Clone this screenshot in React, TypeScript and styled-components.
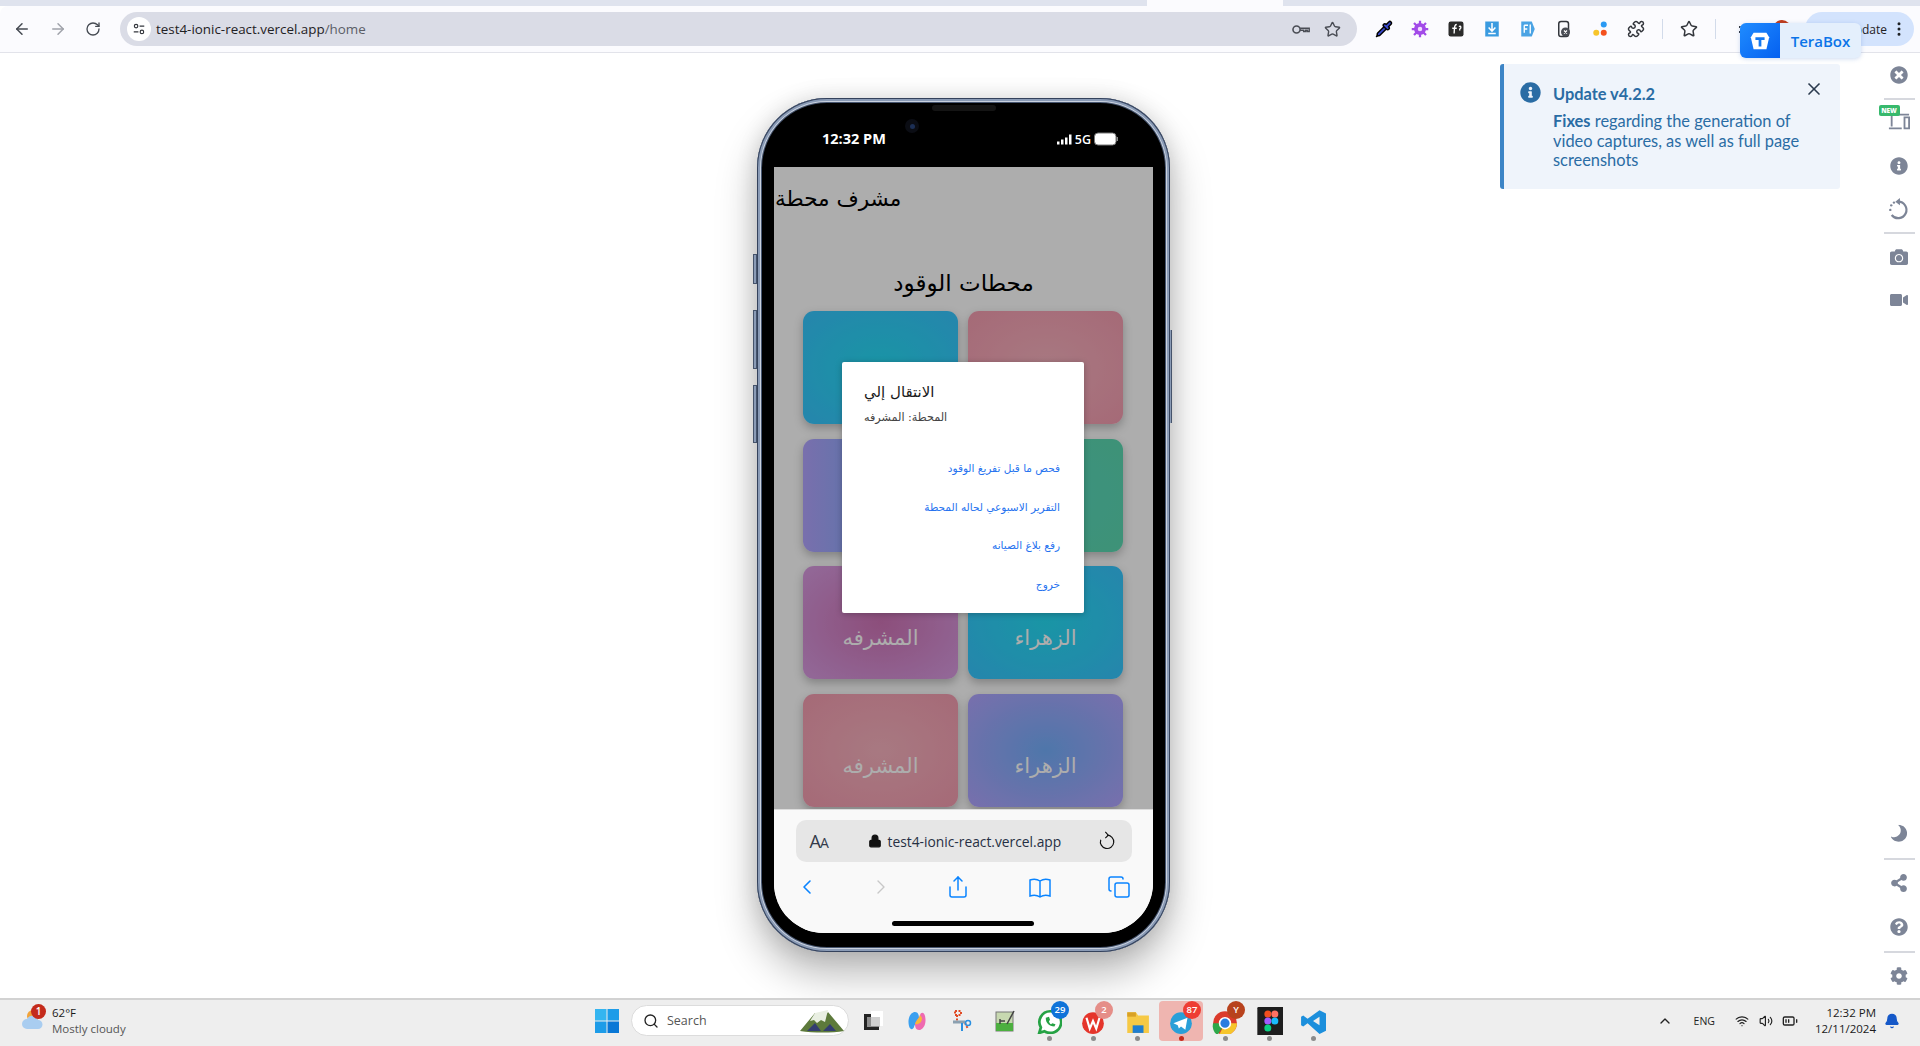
import React from "react";
import styled, { createGlobalStyle } from "styled-components";
import { ArrowLeft, ArrowRight, RotateCw, Star, Puzzle, ChevronLeft, ChevronRight, ChevronUp, X, Lock, Search, Bell, Volume2, Wifi, BatteryMedium, Share, Copy, Pipette, EllipsisVertical } from "lucide-react";
import { FaTimesCircle, FaInfoCircle, FaCamera, FaVideo, FaMoon, FaShareAlt, FaQuestionCircle, FaCog } from "react-icons/fa";

const Global = createGlobalStyle`
  html, body { margin: 0; padding: 0; background: #fff; }
  body { font-family: "Open Sans", "Noto Sans", sans-serif; }
  * { box-sizing: border-box; }
`;

const Page = styled.div`
  width: 1920px; height: 1046px; display: flex; flex-direction: column; overflow: hidden; position: relative;
`;

/* Browser chrome */
const TabStrip = styled.div`
  height: 6px; background: #dfe3ee; flex: none; overflow: hidden; padding-left: 1147px;
`;
const ActiveTab = styled.div`
  width: 136px; height: 6px; background: #fbfbfe;
`;
const Toolbar = styled.header`
  height: 47px; flex: none; background: #fbfbfe; border-bottom: 1px solid #e2e3ea; border-top-left-radius: 8px; display: flex; align-items: center; padding-left: 13px; position: relative;
`;
const NavBtn = styled.span<{ $w?: number; $c?: string }>`
  width: ${p => p.$w ?? 36}px; flex: none; display: flex; color: ${p => p.$c ?? "#454a52"};
`;
const Omni = styled.div`
  width: 1237px; height: 34px; border-radius: 17px; background: #dadce6; display: flex; align-items: center; padding: 0 16px 0 7px; flex: none;
`;
const SiteInfo = styled.span`
  width: 24px; height: 24px; border-radius: 50%; background: #fff; display: flex; align-items: center; justify-content: center; flex: none;
`;
const Url = styled.span`
  font: 13.4px "Open Sans", sans-serif; color: #1f2124; margin-left: 5px; flex: 1;
`;
const UrlPath = styled.span` color: #5b5e66; `;
const OmniIcon = styled.span` display: flex; margin-left: 14px; color: #4a4d55; `;
const ExtRow = styled.div`
  display: flex; align-items: center; margin-left: 9px; flex: none;
`;
const Ext = styled.span`
  width: 36px; height: 24px; display: flex; align-items: center; justify-content: center; flex: none; color: #33363c;
`;
const TbDivider = styled.span`
  width: 1px; height: 20px; background: #d2dbea; margin: 0 8px; flex: none;
`;
const MenuLines = styled.span`
  width: 24px; margin-left: 10px; display: flex; flex-direction: column; align-items: center; gap: 3px; flex: none;
  &::before, &::after { content: ""; width: 14px; height: 2px; background: #33363c; }
`;
const Avatar = styled.span`
  width: 18px; height: 18px; background: #c13a18; border-radius: 50%; margin-left: 15px; flex: none;
`;
const UpdatePill = styled.div`
  width: 109px; height: 34px; border-radius: 17px; background: #d3e3fd; margin-left: 14px; display: flex; align-items: center; justify-content: flex-end; gap: 3px; padding-right: 6px; font: 12px "Open Sans", sans-serif; color: #1f2124; flex: none;
`;
const TeraBox = styled.div`
  position: absolute; left: 1740px; top: 23px; width: 121px; height: 35px; display: flex; border-radius: 6px; overflow: hidden; background: #e4effc; box-shadow: 0 1px 4px rgba(60,110,200,.25); z-index: 5;
`;
const TeraLogo = styled.span`
  width: 40px; background: linear-gradient(135deg, #1f8cff, #0560f0); display: flex; align-items: center; justify-content: center;
`;
const TeraLabel = styled.span`
  flex: 1; text-align: center; font: 600 15px/37px "Open Sans", sans-serif; color: #0b74e8;
`;

/* Main area */
const Main = styled.main`
  flex: 1; display: flex; position: relative; min-height: 0;
`;
const Stage = styled.div`
  flex: 1; padding: 45px 0 0 757px;
`;

/* Phone */
const Phone = styled.div`
  width: 413px; height: 854px; border-radius: 70px; background: #000; position: relative; display: flex; flex-direction: column; padding: 0 17px 19px 17px;
  box-shadow: inset 0 0 0 1px #34425c, inset 0 0 0 3px #8a9bb6, inset 0 0 0 4px #c9d1de, inset 0 0 0 5px #46556f, 0 22px 40px rgba(0,0,0,.28), 0 0 22px rgba(0,0,0,.12);
`;
const SideBtn = styled.span<{ $top: number; $h: number; $right?: boolean }>`
  position: absolute; top: ${p => p.$top}px; height: ${p => p.$h}px; background: #8a9bb6; border: 1px solid #45536b;
  ${p => p.$right ? "right: -2px; width: 2px; border-width: 0 1px 0 0;" : "left: -4px; width: 4px;"}
`;
const StatusBar = styled.div`
  height: 69px; flex: none; display: flex; align-items: flex-end; justify-content: space-between; padding: 0 35px 18px 48px; color: #fff; position: relative;
`;
const Speaker = styled.span`
  position: absolute; left: 158px; top: 7px; width: 64px; height: 6px; border-radius: 3px; background: #141414;
`;
const Camera = styled.span`
  position: absolute; left: 131px; top: 21px; width: 14px; height: 14px; border-radius: 50%; background: #0b0d14; display: flex; align-items: center; justify-content: center;
  &::after { content: ""; width: 5px; height: 5px; border-radius: 50%; background: #1c2f55; }
`;
const Clock = styled.span` font: 700 14.5px "Open Sans", sans-serif; line-height: 20px; `;
const StatusRight = styled.span` display: flex; align-items: center; gap: 3px; font: 600 12.5px "Open Sans", sans-serif; height: 18px; margin-bottom: 1px; `;
const Screen = styled.div`
  flex: 1; min-height: 0; position: relative; display: flex; flex-direction: column; background: #fff; overflow: hidden; border-radius: 0 0 50px 50px;
`;
const Content = styled.div`
  height: 642px; flex: none; position: relative; overflow: hidden; color: #000;
`;
const AppTitle = styled.h1`
  margin: 0; height: 66px; font: 400 21.5px/64px "DejaVu Sans", sans-serif; text-align: left; padding-left: 1px;
`;
const SectionTitle = styled.h2`
  margin: 0; font: 400 23px/40px "DejaVu Sans", sans-serif; text-align: center; padding-top: 30px; height: 78px;
`;
const CardGrid = styled.div`
  display: grid; grid-template-columns: 155px 155px; grid-auto-rows: 113px; column-gap: 10px; row-gap: 14.5px; padding-left: 29px;
`;
const Card = styled.div<{ $bg: string }>`
  border-radius: 11px; background: ${p => p.$bg}; box-shadow: 0 4px 10px rgba(0,0,0,.25); color: #fff; font: 400 21px "DejaVu Sans", sans-serif; display: flex; justify-content: center; padding-top: 60px;
`;
const Scrim = styled.div`
  position: absolute; inset: 0; background: rgba(0,0,0,.32);
`;
const Dialog = styled.div`
  position: absolute; left: 68px; top: 195px; width: 242px; height: 251px; background: #fff; border-radius: 2px; box-shadow: 0 1px 6px rgba(0,0,0,.25); padding: 18px 21px 0 22px;
`;
const DialogTitle = styled.div`
  font: 400 15px/24px "DejaVu Sans", sans-serif; color: #1a1a1a; text-align: left;
`;
const DialogSub = styled.div`
  font: 400 11.2px/27px "DejaVu Sans", sans-serif; color: #444; text-align: left;
`;
const DialogActions = styled.div`
  margin-top: 18px; display: flex; flex-direction: column;
`;
const DialogAction = styled.div`
  height: 38.7px; font: 400 10.5px/38px "DejaVu Sans", sans-serif; color: #2673ef; text-align: right; padding-right: 3px; white-space: nowrap;
`;
const Safari = styled.div`
  flex: 1; background: #f9f9f9; border-top: 1px solid #dcdcdc; display: flex; flex-direction: column; align-items: center; padding-top: 10px; position: relative;
`;
const SafariBar = styled.div`
  width: 336px; height: 42px; background: #e6e6e6; border-radius: 10px; display: flex; align-items: center; padding: 0 15px 0 14px; flex: none;
`;
const AA = styled.span` font: 400 18px "Open Sans", sans-serif; color: #333a4a; letter-spacing: -1px; width: 52px; `;
const SmallA = styled.span` font-size: 14px; `;
const SafariUrl = styled.span`
  flex: 1; display: flex; align-items: center; gap: 6px; font: 400 13.8px "Open Sans", sans-serif; color: #263044; padding-left: 6px;
`;
const SafariNav = styled.div`
  width: 336px; display: grid; grid-template-columns: 74px 77px 82px 79px 24px; align-items: center; margin-top: 10px; height: 30px; margin-left: -2px; color: #0a84ff;
`;
const NavSlot = styled.span<{ $c?: string }>`
  width: 24px; display: flex; justify-content: center; color: ${p => p.$c ?? "inherit"};
`;
const HomeBar = styled.span`
  position: absolute; left: 118px; bottom: 7px; width: 142px; height: 5px; border-radius: 3px; background: #000;
`;

/* Toast */
const Toast = styled.aside`
  position: absolute; left: 1500px; top: 11px; width: 340px; height: 125px; background: #eff4fb; border-left: 4px solid #3d85c6; border-radius: 3px; color: #2a6ca4; padding: 19px 0 0 49px; font-family: "Lato", sans-serif;
`;
const ToastIcon = styled.span`
  position: absolute; left: 16px; top: 18px; display: flex; color: #2a6ca4;
`;
const ToastClose = styled.span`
  position: absolute; left: 300px; top: 15px; display: flex; color: #2b3a4e;
`;
const ToastTitle = styled.div` font: 700 16.4px/22px "Lato", sans-serif; `;
const ToastBody = styled.div` font: 400 16.4px/19.5px "Lato", sans-serif; margin-top: 6px; width: 262px; `;

/* Sidebar */
const Sidebar = styled.nav`
  width: 42px; flex: none; display: flex; flex-direction: column; justify-content: space-between; align-items: center; color: #7d8597;
`;
const SideGroup = styled.div` display: flex; flex-direction: column; align-items: center; `;
const SideItem = styled.span`
  width: 31px; height: 43.5px; display: flex; align-items: center; justify-content: center; position: relative; flex: none;
`;
const SideRule = styled.span<{ $m: number }>`
  width: 31px; height: 2px; background: #d6d8de; margin: ${p => p.$m}px 0; flex: none;
`;
const NewBadge = styled.span`
  position: absolute; left: -5px; top: 4px; width: 21px; height: 11px; background: #37b96c; border-radius: 2px; color: #fff; font: 800 6.5px/11px "Open Sans", sans-serif; text-align: center;
`;
const Crescent = styled(FaMoon)` transform: scaleX(-1) rotate(-12deg); `;

/* Taskbar */
const Taskbar = styled.footer`
  height: 48px; flex: none; background: #eeeeee; border-top: 2px solid #d2d2d2; display: flex; align-items: center; position: relative; padding: 0 0 5px 20px;
`;
const Weather = styled.div`
  width: 575px; flex: none; display: flex; align-items: center; gap: 8px;
`;
const WeatherIcon = styled.span` position: relative; width: 24px; height: 30px; display: flex; `;
const RedBadge = styled.span`
  position: absolute; left: 11px; top: -2px; width: 15px; height: 15px; border-radius: 50%; background: #c42b1c; color: #fff; font: 600 10px/15px "Open Sans", sans-serif; text-align: center;
`;
const WeatherText = styled.div` font: 400 11.5px/16px "Open Sans", sans-serif; color: #1a1a1a; `;
const WeatherSub = styled.div` color: #555; `;
const SearchBox = styled.div`
  width: 218px; height: 31px; margin-left: 12px; border-radius: 16px; background: #fff; border: 1px solid #dcdcdc; display: flex; align-items: center; padding: 0 3px 0 11px; gap: 8px; font: 400 12.5px "Open Sans", sans-serif; color: #555; flex: none;
`;
const SearchLabel = styled.span` flex: 1; `;
const Apps = styled.div`
  display: flex; align-items: center; margin-left: 2px; flex: none;
`;
const AppIcon = styled.span<{ $active?: boolean; $dot?: boolean }>`
  width: 44px; height: 40px; display: flex; align-items: center; justify-content: center; position: relative; border-radius: 4px; flex: none;
  ${p => p.$active ? "background: #efb5b0;" : ""}
  ${p => p.$dot ? `&::after { content: ""; position: absolute; left: 50%; margin-left: -2.5px; bottom: 0; width: 5px; height: 5px; border-radius: 50%; background: ${p.$active ? "#c42b1c" : "#8b8b8b"}; }` : ""}
`;
const CountBadge = styled.span<{ $bg: string }>`
  position: absolute; left: 24px; top: 0; min-width: 18px; height: 18px; border-radius: 9px; background: ${p => p.$bg}; color: #fff; font: 600 9.5px/18px "Open Sans", sans-serif; text-align: center;
`;
const Tray = styled.div`
  margin-left: auto; display: flex; align-items: center; padding-right: 20px; color: #222;
`;
const Eng = styled.span` font: 400 10.5px "Open Sans", sans-serif; margin: 0 15px 0 17px; `;
const TrayIcon = styled.span` display: flex; width: 24px; justify-content: center; `;
const ClockBox = styled.div` font: 400 11.5px/16px "Open Sans", sans-serif; text-align: right; margin: 0 8px 0 13px; color: #1a1a1a; `;

const soft = (a: string, b: string) => `radial-gradient(ellipse closest-corner, ${a} 0%, ${b} 100%)`;
const cards = [
  ["المشرفه", soft("#26dcf4", "#38c5ff")],
  ["الزهراء", soft("#f8b3bf", "#f49cb0")],
  ["المشرفه", "linear-gradient(90deg, #b3a5ff 0%, #74affb 60%, #5ad7bc 100%)"],
  ["الزهراء", soft("#5ad7bc", "#5cd8b0")],
  ["المشرفه", soft("#cf74b6", "#d89ce2")],
  ["الزهراء", soft("#26dcf4", "#38c5ff")],
  ["المشرفه", soft("#f8b3bf", "#f49cb0")],
  ["الزهراء", soft("#74affb", "#b3a5ff")],
];
const actions = ["فحص ما قبل تفريغ الوقود", "التقرير الاسبوعي لحاله المحطة", "رفع بلاغ الصيانه", "خروج"];

const Svg = ({ s = 24, v = "0 0 24 24", children }: { s?: number; v?: string; children: React.ReactNode }) => (
  <svg width={s} height={s} viewBox={v} fill="none">{children}</svg>
);

export default function App() {
  return (
    <Page>
      <Global />
      <TabStrip><ActiveTab /></TabStrip>
      <Toolbar>
        <NavBtn><ArrowLeft size={18} /></NavBtn>
        <NavBtn $c="#a0a3ab"><ArrowRight size={18} /></NavBtn>
        <NavBtn $w={35}><RotateCw size={16} /></NavBtn>
        <Omni>
          <SiteInfo>
            <Svg s={14}>
              <circle cx="7" cy="7" r="3" stroke="#33363c" strokeWidth="2" /><path d="M13 7h8M3 17h8" stroke="#33363c" strokeWidth="2" /><circle cx="17" cy="17" r="3" stroke="#33363c" strokeWidth="2" />
            </Svg>
          </SiteInfo>
          <Url>test4-ionic-react.vercel.app<UrlPath>/home</UrlPath></Url>
          <OmniIcon>
            <Svg s={19}><circle cx="7" cy="12" r="4.500" stroke="#4a4d55" strokeWidth="2" /><path d="M11.500 10.500H23v4h-2.500v-1.500h-2v1.500h-2.500v-1.500h-4.500" stroke="#4a4d55" strokeWidth="1.800" /></Svg>
          </OmniIcon>
          <OmniIcon><Star size={17} /></OmniIcon>
        </Omni>
        <ExtRow>
          <Ext><Pipette size={18} color="#000" fill="#3b4bd0" /></Ext>
          <Ext><Svg s={18}><circle cx="12" cy="12" r="8" fill="#a24be8" /><circle cx="12" cy="12" r="3" fill="#f1d9ff" /><path d="M12 1v5M12 18v5M1 12h5M18 12h5M4 4l4 4M16 16l4 4M20 4l-4 4M8 16l-4 4" stroke="#a24be8" strokeWidth="3" /></Svg></Ext>
          <Ext><Svg s={18}><rect x="2" y="2" width="20" height="20" rx="3" fill="#2b2b2b" /><path d="M13 6c-3 0-3 3-3.500 12M7 11h6M16 9c2-2 4 1 1 3v2" stroke="#fff" strokeWidth="1.800" /></Svg></Ext>
          <Ext><Svg s={18}><rect x="3" y="2" width="18" height="20" fill="#3a9be0" /><path d="M12 4v10M7.500 10l4.500 5 4.500-5M7 18h10" stroke="#fff" strokeWidth="2" /></Svg></Ext>
          <Ext><Svg s={18}><path d="M3 2h14l4 10-4 10H3z" fill="#4aa3e4" /><path d="M7 7h5M7 7v10M7 12h4M15 6v12" stroke="#fff" strokeWidth="1.800" /></Svg></Ext>
          <Ext><Svg s={18}><rect x="5" y="2" width="13" height="20" rx="3" stroke="#33363c" strokeWidth="2" /><circle cx="14" cy="16" r="6" fill="#4a4d55" /><path d="M12 14l4 4M16 14l-4 4" stroke="#fff" strokeWidth="1.500" /></Svg></Ext>
          <Ext><Svg s={18}><circle cx="17" cy="6" r="4" fill="#2b9af3" /><circle cx="7" cy="17" r="4" fill="#f7c52b" /><circle cx="17" cy="17" r="4" fill="#f4511e" /></Svg></Ext>
          <Ext><Puzzle size={18} /></Ext>
          <TbDivider />
          <Ext><Star size={18} /></Ext>
          <TbDivider />
          <MenuLines />
          <Avatar />
          <UpdatePill>Update<EllipsisVertical size={18} /></UpdatePill>
        </ExtRow>
      </Toolbar>
      <TeraBox>
        <TeraLogo>
          <Svg s={22}><path d="M5 3h14l3 5-3 13H5L2 8z" fill="#fff" /><path d="M7 8h10v3h-3.500v7h-3v-7H7z" fill="#1478f0" /></Svg>
        </TeraLogo>
        <TeraLabel>TeraBox</TeraLabel>
      </TeraBox>
      <Main>
        <Stage>
          <Phone>
            <SideBtn $top={156} $h={30} />
            <SideBtn $top={212} $h={59} />
            <SideBtn $top={287} $h={58} />
            <SideBtn $right $top={232} $h={93} />
            <StatusBar>
              <Speaker />
              <Camera />
              <Clock>12:32 PM</Clock>
              <StatusRight>
                <Svg s={15} v="0 0 15 12"><path d="M0 8h2.500v3H0zM4 6h2.500v5H4zM8 4h2.500v7H8zM12 1h2.500v10H12z" fill="#fff" /></Svg>
                5G
                <Svg s={24} v="0 0 24 12"><rect x="0.500" y="0" width="21.500" height="12" rx="3.500" fill="#fff" stroke="#777" /><rect x="22.500" y="4" width="1.500" height="4" fill="#888" /></Svg>
              </StatusRight>
            </StatusBar>
            <Screen>
              <Content>
                <AppTitle>مشرف محطة</AppTitle>
                <SectionTitle>محطات الوقود</SectionTitle>
                <CardGrid>
                  {cards.map(([t, bg], i) => <Card key={i} $bg={bg}>{t}</Card>)}
                </CardGrid>
                <Scrim />
                <Dialog>
                  <DialogTitle>الانتقال إلي</DialogTitle>
                  <DialogSub>المحطة: المشرفه</DialogSub>
                  <DialogActions>
                    {actions.map(a => <DialogAction key={a}>{a}</DialogAction>)}
                  </DialogActions>
                </Dialog>
              </Content>
              <Safari>
                <SafariBar>
                  <AA>A<SmallA>A</SmallA></AA>
                  <SafariUrl><Lock size={14} fill="#111" color="#111" />test4-ionic-react.vercel.app</SafariUrl>
                  <Svg s={20}>
                    <path d="M12 5a8 8 0 1 1-7.500 5.500" stroke="#111" strokeWidth="1.400" /><path d="M10 1l3.500 4L10 8.500" stroke="#111" strokeWidth="1.400" />
                  </Svg>
                </SafariBar>
                <SafariNav>
                  <NavSlot><ChevronLeft size={30} strokeWidth={1.6} /></NavSlot>
                  <NavSlot $c="#c8c8c8"><ChevronRight size={30} strokeWidth={1.4} /></NavSlot>
                  <NavSlot><Share size={24} strokeWidth={1.5} /></NavSlot>
                  <NavSlot>
                    <Svg s={26}><path d="M12 6C9 4 5 4 2 5v16c3-1 7-1 10 1 3-2 7-2 10-1V5c-3-1-7-1-10 1zM12 6v16" stroke="#0a84ff" strokeWidth="1.500" /></Svg>
                  </NavSlot>
                  <NavSlot><Copy size={24} strokeWidth={1.5} /></NavSlot>
                </SafariNav>
                <HomeBar />
              </Safari>
            </Screen>
          </Phone>
        </Stage>
        <Toast>
          <ToastIcon><FaInfoCircle size={21} /></ToastIcon>
          <ToastClose><X size={20} /></ToastClose>
          <ToastTitle>Update v4.2.2</ToastTitle>
          <ToastBody><b>Fixes</b> regarding the generation of video captures, as well as full page screenshots</ToastBody>
        </Toast>
        <Sidebar>
          <SideGroup>
            <SideItem><FaTimesCircle size={18} /></SideItem>
            <SideRule $m={1} />
            <SideItem>
              <Svg s={22}><path d="M4 5v12M1 19h14M18 7h5v12h-5zM6 4h17" stroke="#7d8597" strokeWidth="2" /></Svg>
              <NewBadge>NEW</NewBadge>
            </SideItem>
            <SideItem><FaInfoCircle size={18} /></SideItem>
            <SideItem>
              <Svg s={22}>
                <path d="M11 4a9 9 0 1 1-7 14.500" stroke="#7d8597" strokeWidth="2.400" /><path d="M13 0v8L8 4z" fill="#7d8597" />
                <circle cx="2.500" cy="13" r="1.300" fill="#7d8597" /><circle cx="3.500" cy="8" r="1.300" fill="#7d8597" /><circle cx="6.500" cy="5" r="1.300" fill="#7d8597" />
              </Svg>
            </SideItem>
            <SideRule $m={1} />
            <SideItem><FaCamera size={18} /></SideItem>
            <SideItem><FaVideo size={18} /></SideItem>
          </SideGroup>
          <SideGroup>
            <SideItem><Crescent size={17} /></SideItem>
            <SideRule $m={2} />
            <SideItem><FaShareAlt size={18} /></SideItem>
            <SideItem><FaQuestionCircle size={18} /></SideItem>
            <SideRule $m={2} />
            <SideItem><FaCog size={18} /></SideItem>
          </SideGroup>
        </Sidebar>
      </Main>
      <Taskbar>
        <Weather>
          <WeatherIcon>
            <Svg s={26}><circle cx="13" cy="9" r="6" fill="#f2a33a" /><path d="M7 22a5 5 0 0 1 0-10 6 6 0 0 1 11 1 4.500 4.500 0 0 1 0 9z" fill="#a9cdf0" /></Svg>
            <RedBadge>1</RedBadge>
          </WeatherIcon>
          <WeatherText>62°F<WeatherSub>Mostly cloudy</WeatherSub></WeatherText>
        </Weather>
        <Svg s={24} v="0 0 24 24"><path d="M0 0h11.500v11.500H0z" fill="#34b5f0" /><path d="M12.500 0H24v11.500H12.500z" fill="#1d9ce8" /><path d="M0 12.500h11.500V24H0z" fill="#1d9ce8" /><path d="M12.500 12.500H24V24H12.500z" fill="#0a78d6" /></Svg>
        <SearchBox>
          <Search size={16} color="#222" />
          <SearchLabel>Search</SearchLabel>
          <Svg s={46} v="0 0 46 24"><path d="M1 22L16 4l7 6 6-7 16 19c-12 2-30 2-44 0z" fill="#5d7a3b" /><path d="M16 4l-5 8 4-1 3 3 4-3 4 2 3-12z" fill="#e9efe2" /><path d="M8 22l8-8 6 8zM24 22l7-7 6 7z" fill="#333d70" /></Svg>
        </SearchBox>
        <Apps>
          <AppIcon><Svg s={24}><rect x="3" y="5" width="15" height="16" fill="#222" /><path d="M10 2h12v15H10z" fill="#fff" /><path d="M6 8h13v10H6z" fill="#bbb" opacity=".7" /></Svg></AppIcon>
          <AppIcon><Svg s={24}><path d="M4 17C2 9 6 3 10 3c3 0 4 3 4 6-1 4-4 5-5 9-1 3-4 3-5-1z" fill="#3aa0f0" /><path d="M20 7c2 8-2 14-6 14-3 0-4-3-4-6 1-4 4-5 5-9 1-3 4-3 5 1z" fill="#ef6ab0" /><path d="M10 15c1-4 4-5 5-9l2 3c0 5-4 7-7 6z" fill="#f6b73c" /></Svg></AppIcon>
          <AppIcon><Svg s={24}><path d="M6 2h6v4H6zM8 6v8M16 14l3 6" stroke="#e04a25" strokeWidth="2" strokeDasharray="2 1.500" /><path d="M4 13h12" stroke="#8ba0b0" strokeWidth="3" /><path d="M13 14v8" stroke="#2a8fe0" strokeWidth="2" /><circle cx="19" cy="14" r="2.500" stroke="#2a8fe0" strokeWidth="1.500" /></Svg></AppIcon>
          <AppIcon><Svg s={24}><rect x="3" y="3" width="17" height="19" fill="#c7d8b0" stroke="#777" /><path d="M3 14h17v8H3z" fill="#4caf3f" /><path d="M7 10v5M7 12h5M21 2l-7 13" stroke="#444" strokeWidth="1.500" /></Svg></AppIcon>
          <AppIcon $dot>
            <Svg s={26}><path d="M13 3a10 10 0 0 0-8.500 15L3 23l5-1.500A10 10 0 1 0 13 3z" stroke="#25a244" strokeWidth="2.500" fill="#fff" /><path d="M9 9c0 5 3 8 8 8l1-2-3-1-1 1c-1 0-2-2-2-3l1-1-1-3z" fill="#25a244" /></Svg>
            <CountBadge $bg="#0f73d9">29</CountBadge>
          </AppIcon>
          <AppIcon $dot>
            <Svg s={26}><circle cx="12" cy="14" r="10" fill="#e5352b" /><path d="M6 9l3 10 3-7 3 7 3-10" stroke="#fff" strokeWidth="2" /></Svg>
            <CountBadge $bg="#e58e88">2</CountBadge>
          </AppIcon>
          <AppIcon $dot><Svg s={26}><path d="M3 4h8l2 3h10v16H3z" fill="#f6c945" /><path d="M3 4h8v4H3z" fill="#d9a126" /><path d="M8 16h10v7H8z" fill="#1f7ed0" /></Svg></AppIcon>
          <AppIcon $dot $active>
            <Svg s={26}><circle cx="12" cy="14" r="10" fill="#2a9fd8" /><path d="M5 14l13-5-2 11-4-3-2 2-1-3z" fill="#fff" /></Svg>
            <CountBadge $bg="#ee3d33">87</CountBadge>
          </AppIcon>
          <AppIcon $dot>
            <Svg s={26}><circle cx="12" cy="14" r="11" fill="#db3a2b" /><path d="M12 14L5 25a11 11 0 0 1-4-11z" fill="#2ea84a" /><path d="M12 14l11 0a11 11 0 0 1-16 10z" fill="#f6c52b" /><circle cx="12" cy="14" r="5" fill="#2a7ce0" stroke="#fff" strokeWidth="1.500" /></Svg>
            <CountBadge $bg="#b8421d">Y</CountBadge>
          </AppIcon>
          <AppIcon $dot><Svg s={28}><rect x="2" y="0" width="24" height="28" rx="1" fill="#1e1e1e" /><circle cx="11" cy="6" r="3" fill="#f24e1e" /><circle cx="17" cy="6" r="3" fill="#ff7262" /><circle cx="11" cy="12" r="3" fill="#a259ff" /><circle cx="17" cy="12" r="3" fill="#1abcfe" /><circle cx="11" cy="18" r="3" fill="#0acf83" /></Svg></AppIcon>
          <AppIcon $dot><Svg s={26}><path d="M18 2l6 3v16l-6 3L7 14l-4 3-2-1V8l2-1 4 3zM18 8l-6 4 6 4z" fill="#1c8fdc" /></Svg></AppIcon>
        </Apps>
        <Tray>
          <TrayIcon><ChevronUp size={16} /></TrayIcon>
          <Eng>ENG</Eng>
          <TrayIcon><Wifi size={14} /></TrayIcon>
          <TrayIcon><Volume2 size={14} /></TrayIcon>
          <TrayIcon><BatteryMedium size={16} /></TrayIcon>
          <ClockBox>12:32 PM<br />12/11/2024</ClockBox>
          <Bell size={16} fill="#1558c8" color="#1558c8" />
        </Tray>
      </Taskbar>
    </Page>
  );
}
